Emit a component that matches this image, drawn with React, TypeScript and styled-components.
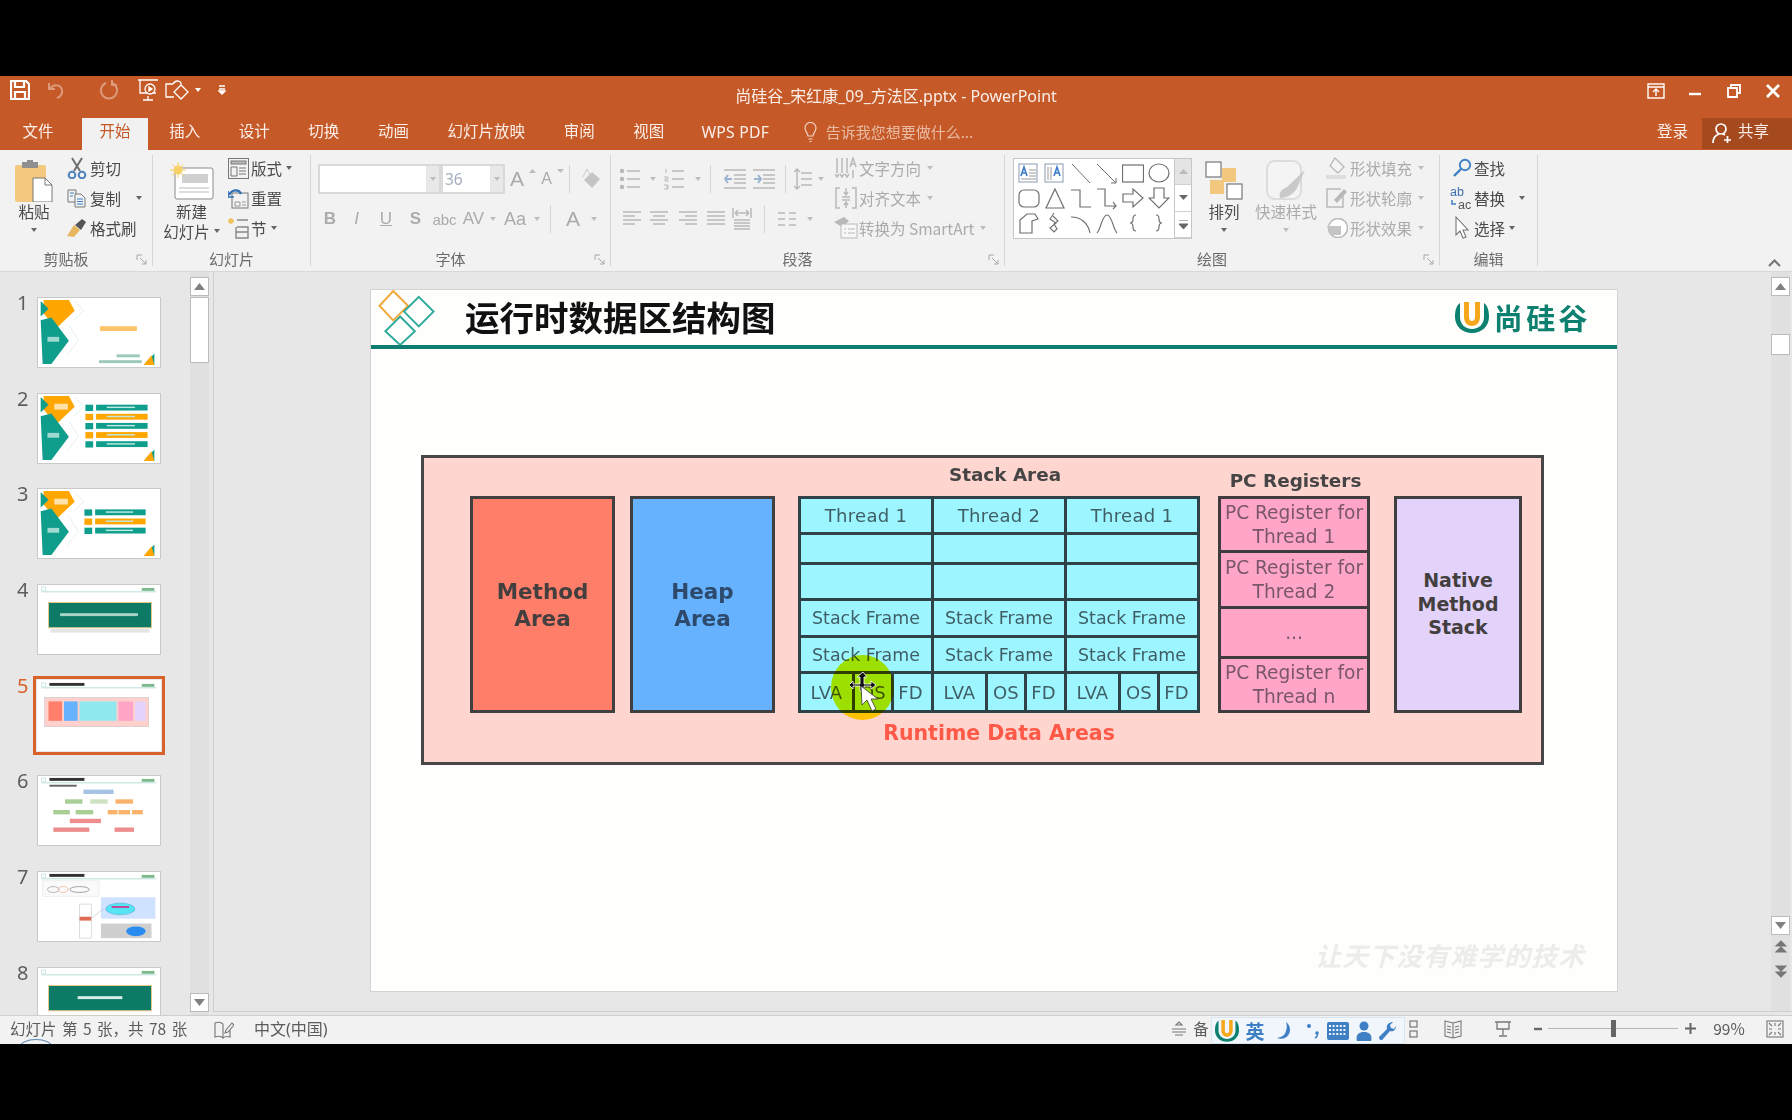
import React, { FC, ReactNode } from "react";
import styled, { createGlobalStyle } from "styled-components";

const CN = `"Noto Sans CJK SC", "Noto Sans", sans-serif`;
const DIAGRAM = `"DejaVu Sans", sans-serif`;
const ORANGE = "#c55a28";
const MUTED = "#ababab";
const INK = "#4a4a4a";
const BLUE = "#3f7fc4";

const GlobalStyle = createGlobalStyle`
  html, body { margin: 0; padding: 0; background: #000; }
  * { box-sizing: border-box; }
`;

const AppRoot = styled.div`
  width: 1792px;
  height: 1120px;
  background: #000;
  display: flex;
  flex-direction: column;
  overflow: hidden;
  font-family: ${CN};
  filter: blur(0.45px);
`;

const Letterbox = styled.div<{ $height?: number }>`
  flex: ${(p) => (p.$height ? `0 0 ${p.$height}px` : "1")};
  background: #000;
`;

const Svg = styled.svg`
  display: block;
  flex: none;
`;

/* title bar */
const TitleBar = styled.div`
  flex: 0 0 42px;
  background: ${ORANGE};
  display: grid;
  grid-template-columns: 1fr auto 1fr;
  color: #fff;
`;

const QuickAccess = styled.div`
  display: flex;
  align-items: center;
  height: 28px;
  padding-left: 10px;
`;

const QuickSlot = styled.div<{ $width: number }>`
  width: ${(p) => p.$width}px;
  display: flex;
  justify-content: center;
`;

const DocTitle = styled.div`
  font-size: 16px;
  line-height: 40px;
  color: #fbeee8;
  font-family: "Noto Sans", ${CN};
`;

const WindowControls = styled.div`
  display: flex;
  justify-content: flex-end;
  align-items: center;
  height: 30px;
`;

const ControlSlot = styled.div`
  width: 39px;
  display: flex;
  justify-content: center;
`;

/* tabs */
const TabBar = styled.div`
  flex: 0 0 32px;
  background: ${ORANGE};
  display: flex;
  padding-left: 5px;
  color: #fbeee8;
`;

const Tab = styled.div<{ $active?: boolean; $file?: boolean }>`
  padding: 0 17.5px;
  margin-right: ${(p) => (p.$file ? 11 : 3.6)}px;
  font-size: 15.5px;
  height: 32px;
  line-height: 25px;
  white-space: nowrap;
  background: ${(p) => (p.$active ? "#f1f1f1" : "transparent")};
  color: ${(p) => (p.$active ? ORANGE : "inherit")};
`;

const TabLatin = styled(Tab)`
  font-family: "Noto Sans", sans-serif;
  font-size: 15.8px;
  letter-spacing: 0.2px;
  padding: 0 16px;
  line-height: 28px;
`;

const TellMe = styled.div`
  display: flex;
  align-items: center;
  gap: 9px;
  margin-left: 15px;
  padding-bottom: 5px;
  font-size: 15px;
  color: #e9bba5;
`;

const TabRight = styled.div`
  margin-left: auto;
  display: flex;
  align-items: flex-start;
  font-size: 15.5px;
  line-height: 25px;
`;

const ShareButton = styled.div`
  margin-left: 14px;
  width: 90px;
  height: 31px;
  background: #a5491e;
  display: flex;
  align-items: center;
  gap: 6px;
  padding: 0 0 2px 10px;
`;

const ShareLabel = styled.span`
  margin-bottom: 4px;
`;

/* ribbon */
const Ribbon = styled.div`
  flex: 0 0 121px;
  background: #f1f2f1;
  border-bottom: 1px solid #d8d8d8;
  display: flex;
  padding: 5px 0;
  position: relative;
  color: ${INK};
`;

const Group = styled.div<{ $width: number }>`
  position: relative;
  width: ${(p) => p.$width}px;
  height: 111px;
  border-right: 1px solid #d6d6d6;
  display: flex;
  flex-direction: column;
`;

const GroupBody = styled.div<{ $pad?: number }>`
  height: 93px;
  display: flex;
  padding-left: ${(p) => p.$pad ?? 0}px;
`;

const GroupLabel = styled.div<{ $shift?: number }>`
  height: 18px;
  line-height: 22px;
  text-align: center;
  font-size: 15px;
  color: #6a6a6a;
  padding-right: ${(p) => p.$shift ?? 0}px;
`;

const Launcher = styled.div`
  position: absolute;
  right: 5px;
  bottom: 1px;
`;

const BigButton = styled.div<{ $width: number; $muted?: boolean; $gap?: number }>`
  width: ${(p) => p.$width}px;
  margin-left: ${(p) => p.$gap ?? 0}px;
  flex: none;
  display: flex;
  flex-direction: column;
  align-items: center;
  font-size: 15.5px;
  line-height: 20px;
  padding-top: 5px;
  color: ${(p) => (p.$muted ? MUTED : INK)};
`;

const BigIcon = styled.div`
  height: 41px;
  display: flex;
  align-items: center;
`;

const BigCaret = styled.div`
  height: 18px;
  display: flex;
  align-items: center;
`;

const NoWrapRow = styled.div`
  display: flex;
  align-items: center;
  gap: 4px;
  white-space: nowrap;
`;

const ToolList = styled.div<{ $gap?: number }>`
  display: flex;
  flex-direction: column;
  margin-top: -1px;
  margin-left: ${(p) => p.$gap ?? 0}px;
`;

const ToolRow = styled.div<{ $muted?: boolean }>`
  height: 30px;
  display: flex;
  align-items: center;
  padding-bottom: 2px;
  font-size: 15.5px;
  white-space: nowrap;
  color: ${(p) => (p.$muted ? MUTED : INK)};
`;

const ToolIcon = styled.div<{ $width: number }>`
  width: ${(p) => p.$width}px;
  flex: none;
  display: flex;
  justify-content: center;
`;

const ClipLabel = styled.span`
  margin-left: 2px;
`;

const Caret = styled.span<{ $light?: boolean; $gap?: number; $white?: boolean }>`
  display: inline-block;
  flex: none;
  margin-left: ${(p) => p.$gap ?? 4}px;
  width: 0;
  height: 0;
  border-left: 3.5px solid transparent;
  border-right: 3.5px solid transparent;
  border-top: 4px solid ${(p) => (p.$white ? "#fff" : p.$light ? "#bdbdbd" : "#666")};
`;

const FormatColumn = styled.div`
  display: flex;
  flex-direction: column;
  padding-top: 9px;
  gap: 10px;
`;

const FormatRow = styled.div`
  display: flex;
  align-items: center;
  height: 30px;
  color: ${MUTED};
`;

const ComboBox = styled.div<{ $width: number }>`
  width: ${(p) => p.$width}px;
  height: 30px;
  background: #fff;
  border: 2px solid #d9d9d9;
  display: flex;
  align-items: center;
  justify-content: flex-end;
  font-family: "Noto Sans", sans-serif;
  font-size: 15.5px;
  color: #a3aec0;
`;

const ComboValue = styled.span`
  flex: 1;
  padding-left: 2px;
`;

const ComboArrow = styled.span`
  width: 13px;
  height: 26px;
  background: #e8e8e8;
  display: flex;
  align-items: center;
  justify-content: center;
`;

const Glyph = styled.span<{ $size?: number; $bold?: boolean; $italic?: boolean; $under?: boolean; $width: number }>`
  width: ${(p) => p.$width}px;
  text-align: center;
  flex: none;
  font-family: "Liberation Sans", sans-serif;
  font-size: ${(p) => p.$size ?? 17}px;
  font-weight: ${(p) => (p.$bold ? 700 : 400)};
  font-style: ${(p) => (p.$italic ? "italic" : "normal")};
  text-decoration: ${(p) => (p.$under ? "underline" : "none")};
  color: ${MUTED};
`;

const GrowMark = styled.span`
  width: 7px;
  flex: none;
  align-self: flex-start;
  margin-top: 5px;
`;

const RowDivider = styled.span<{ $gap?: number }>`
  width: 1px;
  height: 28px;
  margin: 0 ${(p) => p.$gap ?? 6}px;
  background: #d6d6d6;
  flex: none;
`;

const IconSlot = styled.div<{ $width: number }>`
  width: ${(p) => p.$width}px;
  flex: none;
  display: flex;
  align-items: center;
  justify-content: center;
`;

const Gallery = styled.div`
  margin: 3px 0 0 8px;
  width: 179px;
  height: 81px;
  display: flex;
  background: #fff;
  border: 1px solid #c6c6c6;
`;

const GalleryGrid = styled.div`
  width: 160px;
  display: grid;
  grid-template-columns: repeat(6, 1fr);
  grid-template-rows: repeat(3, 1fr);
  padding: 2px 2px;
  justify-items: center;
  align-items: center;
`;

const GalleryScroll = styled.div`
  flex: 1;
  display: flex;
  flex-direction: column;
  border-left: 1px solid #c6c6c6;
`;

const GalleryStep = styled.div<{ $disabled?: boolean }>`
  flex: 1;
  display: flex;
  align-items: center;
  justify-content: center;
  background: ${(p) => (p.$disabled ? "#e4e4e4" : "#fff")};
  border-bottom: 1px solid #d0d0d0;
`;

const Collapse = styled.div`
  position: absolute;
  right: 11px;
  bottom: 4px;
`;

/* main area */
const Main = styled.div`
  flex: 0 0 743px;
  display: flex;
  background: #e6e7e6;
`;

const Sidebar = styled.div`
  width: 214px;
  flex: none;
  display: flex;
`;

const ThumbList = styled.div`
  width: 190px;
  height: 743px;
  overflow: hidden;
  padding-top: 25px;
`;

const ThumbRow = styled.div`
  height: 95.7px;
  display: flex;
  padding-left: 17px;
`;

const ThumbNum = styled.div<{ $active?: boolean }>`
  width: 20px;
  font-family: "Noto Sans", sans-serif;
  font-size: 20px;
  line-height: 12px;
  color: ${(p) => (p.$active ? "#d9622b" : "#5d5d5d")};
`;

const Thumb = styled.div<{ $active?: boolean }>`
  width: 124px;
  height: 71px;
  background: #fff;
  border: 1px solid ${(p) => (p.$active ? "#fff" : "#c9c9c9")};
  outline: ${(p) => (p.$active ? "3px solid #d9622b" : "none")};
  outline-offset: 1px;
`;

const ScrollTrack = styled.div`
  width: 19px;
  flex: none;
  background: #dfe0df;
  display: flex;
  flex-direction: column;
  padding-top: 5px;
  padding-bottom: 3px;
`;

const ScrollButton = styled.div`
  height: 19px;
  flex: none;
  background: #fff;
  border: 1px solid #bbb;
  display: flex;
  align-items: center;
  justify-content: center;
`;

const ScrollThumb = styled.div<{ $height: number; $top: number }>`
  height: ${(p) => p.$height}px;
  margin-top: ${(p) => p.$top}px;
  flex: none;
  background: #fff;
  border: 1px solid #bbb;
`;

const Spacer = styled.div`
  flex: 1;
`;

const PageStep = styled.div`
  height: 24px;
  flex: none;
  display: flex;
  align-items: center;
  justify-content: center;
`;

const Editor = styled.div`
  flex: 1;
  display: flex;
  border-left: 1px solid #cfcfcf;
  border-bottom: 1px solid #cfcfcf;
  margin-bottom: 3px;
  margin-left: -1px;
`;

const EditorCanvas = styled.div`
  flex: 1;
  padding: 18px 0 0 157px;
`;

const EditorScroll = styled(ScrollTrack)`
  margin-right: 2px;
  padding-bottom: 28px;
`;

/* the slide */
const Slide = styled.div`
  width: 1246px;
  height: 701px;
  background: #fefefd;
  box-shadow: 0 0 0 1px #d2d2d2;
  display: flex;
  flex-direction: column;
`;

const SlideHeader = styled.div`
  height: 59px;
  flex: none;
  border-bottom: 4px solid #0f7d71;
  display: flex;
  align-items: center;
  padding: 0 26px 0 7px;
`;

const SlideTitle = styled.div`
  margin-left: 29px;
  margin-bottom: 3px;
  font-size: 34.5px;
  font-weight: 700;
  color: #111;
  white-space: nowrap;
`;

const Brand = styled.div`
  margin-left: auto;
  display: flex;
  align-items: center;
  gap: 5px;
  margin-bottom: 2px;
`;

const BrandText = styled.div`
  font-size: 29px;
  font-weight: 700;
  letter-spacing: 3.4px;
  line-height: 34px;
  color: #0d8070;
`;

const Diagram = styled.div`
  margin: 106px 0 0 50px;
  width: 1123px;
  height: 310px;
  flex: none;
  background: #ffd5cf;
  border: 3px solid #474747;
  display: flex;
  padding-left: 46px;
  font-family: ${DIAGRAM};
`;

const Column = styled.div<{ $gap?: number; $width: number }>`
  position: relative;
  width: ${(p) => p.$width}px;
  margin-left: ${(p) => p.$gap ?? 0}px;
  flex: none;
`;

const Heading = styled.div<{ $offset: number; $size?: number; $nudge?: number }>`
  height: 38px;
  padding-top: ${(p) => p.$offset}px;
  padding-left: ${(p) => p.$nudge ?? 0}px;
  font-size: ${(p) => p.$size ?? 18.4}px;
  line-height: 24px;
  font-weight: 700;
  text-align: center;
  color: #454545;
  white-space: nowrap;
`;

const AreaBox = styled.div<{ $bg: string; $color?: string; $size: number; $lead: number; $shift?: number }>`
  height: 217px;
  background: ${(p) => p.$bg};
  border: 3px solid #404040;
  display: flex;
  align-items: center;
  justify-content: center;
  text-align: center;
  font-weight: 700;
  font-size: ${(p) => p.$size}px;
  line-height: ${(p) => p.$lead}px;
  color: ${(p) => p.$color ?? "#433f3f"};
  padding-bottom: ${(p) => p.$shift ?? 0}px;
`;

const StackGrid = styled.div`
  height: 217px;
  display: grid;
  grid-template-columns: repeat(3, 1fr);
  grid-template-rows: 33px 27px 33px 34px 33px 1fr;
  gap: 3px;
  padding: 3px;
  background: #2f4248;
`;

const StackCell = styled.div<{ $size?: number; $wide?: boolean }>`
  background: #9df6ff;
  display: flex;
  align-items: center;
  justify-content: center;
  font-size: ${(p) => p.$size ?? 18}px;
  letter-spacing: ${(p) => (p.$wide ? 0.3 : 0)}px;
  color: #3f5e66;
  white-space: nowrap;
`;

const FrameParts = styled.div`
  display: grid;
  grid-template-columns: 52fr 37fr 38fr;
  gap: 3px;

  & > :last-child {
    padding-right: 4px;
  }
`;

const RuntimeLabel = styled(Heading)`
  color: #ff5a48;
`;

const RegisterStack = styled.div`
  height: 217px;
  display: grid;
  grid-template-rows: 51px 53px 47px 1fr;
  gap: 3px;
  padding: 3px;
  background: #403c3e;
`;

const RegisterCell = styled.div`
  background: #ffa6c8;
  display: flex;
  align-items: center;
  justify-content: center;
  text-align: center;
  font-size: 18.6px;
  line-height: 24px;
  color: #79566b;
  white-space: nowrap;
`;

const Highlight = styled.div`
  position: absolute;
  left: 33px;
  top: 197px;
  width: 63px;
  height: 65px;
  border-radius: 50%;
  background: #ffe800;
  mix-blend-mode: multiply;
`;

const Pointer = styled.div`
  position: absolute;
  left: 52px;
  top: 213px;
`;

const Watermark = styled.div`
  margin: auto 32px 18px auto;
  font-size: 26px;
  font-style: italic;
  letter-spacing: 1px;
  color: #ececeb;
  white-space: nowrap;
  font-weight: 700;
`;

/* status bar */
const StatusBar = styled.div`
  flex: 0 0 29px;
  min-height: 0;
  position: relative;
  overflow: hidden;
  background: #f1f2f1;
  border-top: 1px solid #cfcfcf;
  display: flex;
  align-items: center;
  padding-left: 10px;
  font-size: 15.5px;
  color: #5c5c5c;
`;

const StatusText = styled.div<{ $lift?: number }>`
  padding-bottom: ${(p) => p.$lift ?? 5}px;
`;

const SlideCount = styled(StatusText)`
  width: 204px;
  word-spacing: 2px;
`;

const Lang = styled(StatusText)`
  margin-left: 20px;
  font-size: 16px;
  font-family: "Noto Sans", ${CN};
`;

const NoteArc = styled.div`
  position: absolute;
  left: 20px;
  bottom: -10px;
  width: 32px;
  height: 15px;
  border: 1px solid #5b87b5;
  border-radius: 50%;
`;

const StatusRight = styled.div`
  margin-left: auto;
  display: flex;
  align-items: center;
  height: 100%;
  padding-bottom: 3px;
`;

const StatusSlot = styled.div<{ $width: number }>`
  width: ${(p) => p.$width}px;
  display: flex;
  justify-content: center;
  align-items: center;
  flex: none;
`;

const NotesCut = styled.span`
  margin-right: 186px;
  padding-bottom: 2px;
`;

const ZoomTrack = styled.div`
  width: 130px;
  height: 1px;
  background: #b5b5b5;
  position: relative;
  margin: 0 2px;
`;

const ZoomKnob = styled.div`
  position: absolute;
  left: 63px;
  top: -8px;
  width: 5px;
  height: 17px;
  background: #666;
`;

const ImeBar = styled.div`
  position: absolute;
  left: 1211px;
  top: 1px;
  width: 194px;
  height: 27px;
  background: #f0f6fb;
  border: 1px solid #d9e6f1;
  display: flex;
  align-items: center;
  padding-left: 3px;
  color: ${BLUE};
`;

const ImeText = styled.div`
  width: 28px;
  margin-left: 2px;
  font-size: 19px;
  line-height: 24px;
  font-weight: 700;
  text-align: center;
`;

/* icons */
const WinIcon: FC<{ w: number; h: number; children: ReactNode; stroke?: string; sw?: number }> = ({
  w,
  h,
  children,
  stroke = "#fff",
  sw = 1.5,
}) => (
  <Svg width={w} height={h} viewBox={`0 0 ${w} ${h}`} fill="none" stroke={stroke} strokeWidth={sw}>
    {children}
  </Svg>
);

type Seg = [number, number, number];
const Lines: FC<{ w: number; h: number; segs: Seg[]; color?: string; children?: ReactNode }> = ({
  w,
  h,
  segs,
  color = "#b9b9b9",
  children,
}) => (
  <WinIcon w={w} h={h} stroke={color}>
    {segs.map(([a, b, y], i) => (
      <line key={i} x1={a} x2={b} y1={y} y2={y} />
    ))}
    {children}
  </WinIcon>
);

const PasteIcon = () => (
  <Svg width={38} height={42} viewBox="0 0 38 42">
    <rect x="0" y="5" width="31" height="37" rx="2" fill="#f3c97f" />
    <rect x="7" y="2" width="16" height="6" fill="#8f8f8f" />
    <rect x="12" y="0" width="6" height="4" fill="#8f8f8f" />
    <path d="M18 18h12l7 7v17H18z" fill="#fff" stroke="#777" />
    <path d="M30 18v7h7" fill="none" stroke="#777" />
  </Svg>
);

const ScissorsIcon = () => (
  <WinIcon w={20} h={22} stroke="#6d6d6d" sw={2}>
    <path d="M5 1l8 13M15 1L7 14" />
    <circle cx="5" cy="18" r="3.3" stroke="#4f82bd" />
    <circle cx="15" cy="18" r="3.3" stroke="#4f82bd" />
  </WinIcon>
);

const CopyIcon = () => (
  <WinIcon w={20} h={20} stroke="#777" sw={1}>
    <path d="M1 2h8v12H1z" />
    <path d="M8 6h6l4 4v9H8z" fill="#f1f2f1" />
    <path d="M10 11h6M10 13.5h6M10 16h6M3 5h4M3 8h3" stroke={BLUE} />
  </WinIcon>
);

const PainterIcon = () => (
  <Svg width={22} height={20} viewBox="0 0 22 20">
    <path d="M1 18l7-11 6 5-6 7z" fill="#e6b75f" />
    <path d="M9 7l7-6 4 3-5 8z" fill="#555" />
  </Svg>
);

const NewSlideIcon = () => (
  <Svg width={44} height={38} viewBox="0 0 44 38">
    <rect x="5" y="6" width="38" height="31" rx="2" fill="#fff" stroke="#8a8a8a" />
    <rect x="12" y="12" width="26" height="9" fill="#d0d0d0" />
    <path d="M9 26h30M9 30h30" stroke="#bbb" />
    <circle cx="8" cy="8" r="4.5" fill="#f8d46c" />
    <path d="M8 0v16M0 8h16M2.500 2.500l11 11M13.500 2.500l-11 11" stroke="#f6cf60" />
  </Svg>
);

const LayoutIcon = () => (
  <WinIcon w={21} h={21} stroke="#777" sw={1}>
    <rect x="0.5" y="0.5" width="20" height="20" />
    <rect x="3" y="3" width="15" height="3" fill="#bbb" />
    <path d="M3 9h6v9H3zM11 10h7M11 13h7M11 16h7" />
  </WinIcon>
);

const ResetIcon = () => (
  <WinIcon w={21} h={21} stroke="#777" sw={1}>
    <rect x="4" y="5" width="16" height="15" />
    <path d="M7 14h5v4H7zM14 14h4M14 17h4" stroke="#999" />
    <path d="M1 7c3-6 10-6 12-1" stroke="#2f6fb5" strokeWidth="2.4" />
    <path d="M0 3v6h6" stroke="#2f6fb5" strokeWidth="1.6" />
  </WinIcon>
);

const SectionIcon = () => (
  <WinIcon w={21} h={22} stroke="#888" sw={1.4}>
    <path d="M9 3h11M9 10h11v11H8V10M8 15h12" />
    <path d="M3 1v6M0 4h6M1 2l4 4M5 2L1 6" stroke="#f2c05b" />
  </WinIcon>
);

const Eraser = () => (
  <Svg width={20} height={22} viewBox="0 0 20 22">
    <path d="M3 12l8-8 8 7-8 9z" fill="#c5c5c5" />
    <path d="M2 9L6 1M6 1l4 8" stroke="#ccc" fill="none" />
  </Svg>
);

const GrowTri: FC<{ down?: boolean }> = ({ down }) => (
  <GrowMark>
    <Svg width={7} height={4} viewBox="0 0 7 4">
      <path d={down ? "M0 0h7L3.500 4z" : "M0 4h7L3.500 0z"} fill="#bdbdbd" />
    </Svg>
  </GrowMark>
);

const BulletIcon = () => (
  <Lines w={20} h={22} segs={[[7, 20, 3], [7, 20, 11], [7, 20, 19]]}>
    <circle cx="2" cy="3" r="1.5" fill="#bbb" />
    <circle cx="2" cy="11" r="1.5" fill="#bbb" />
    <circle cx="2" cy="19" r="1.5" fill="#bbb" />
  </Lines>
);

const NumberedIcon = () => (
  <Lines w={20} h={22} segs={[[8, 20, 3], [8, 20, 11], [8, 20, 19]]}>
    <path d="M2 1v4M0 9h4v2H1v2h4M0 17h4v4H0M2 19h2" strokeWidth="1" />
  </Lines>
);

const IndentIcon: FC<{ flip?: boolean }> = ({ flip }) => (
  <Lines w={22} h={20} segs={[[0, 22, 1], [10, 22, 6], [10, 22, 10], [10, 22, 14], [0, 22, 19]]}>
    <path d={flip ? "M1 10h7M5 6l3 4-3 4" : "M8 10H1M4 6l-3 4 3 4"} stroke="#9ab3cf" strokeWidth="2" />
  </Lines>
);

const LineSpacingIcon = () => (
  <Lines w={18} h={24} segs={[[7, 18, 6], [7, 18, 12], [7, 18, 18]]}>
    <path d="M3 2v20M0 5l3-3 3 3M0 19l3 3 3-3" />
  </Lines>
);

const alignIcon = (a: number[], b: number[]) => (
  <Lines w={18} h={18} segs={[[a[0], a[1], 2], [b[0], b[1], 6], [a[0], a[1], 10], [b[0], b[1], 14]]} />
);

const DistributeIcon = () => (
  <Lines w={20} h={24} segs={[[2, 18, 13], [2, 18, 16], [2, 18, 19], [2, 18, 22]]}>
    <path d="M1 1v10M19 1v10M3 6h14M3 6l3-3M3 6l3 3M17 6l-3-3M17 6l-3 3" />
  </Lines>
);

const ColumnsIcon = () => (
  <Lines w={18} h={16} segs={[[0, 7, 2], [11, 18, 2], [0, 7, 8], [11, 18, 8], [0, 7, 14], [11, 18, 14]]} />
);

const TextDirIcon = () => (
  <WinIcon w={22} h={22} stroke="#b9b9b9">
    <path d="M2 1v15M7 1v15M12 1v15" />
    <path d="M0 17l2 3 2-3M5 17l2 3 2-3M10 17l2 3 2-3" />
    <path d="M15 10l3-9 3 9M16 7h4M18 13v8" />
  </WinIcon>
);

const AlignTextIcon = () => (
  <WinIcon w={22} h={22} stroke="#b9b9b9">
    <path d="M5 1H1v20h4M17 1h4v20h-4M7 10h8M7 13h8M11 1v7M9 5l2 3 2-3M11 21v-6M9 18l2-3 2 3" />
  </WinIcon>
);

const SmartArtIcon = () => (
  <Svg width={24} height={22} viewBox="0 0 24 22">
    <path d="M0 5l10-5 5 4-7 6z" fill="#b9b9b9" />
    <rect x="7" y="7" width="16" height="14" fill="#f7f7f7" stroke="#b9b9b9" />
    <path d="M10 12h2M14 12h7M10 16h2M14 16h7" stroke="#b9b9b9" />
  </Svg>
);

const ArrangeIcon = () => (
  <Svg width={38} height={40} viewBox="0 0 38 40">
    <rect x="17" y="7" width="14" height="14" fill="#f2c87e" />
    <rect x="5" y="19" width="14" height="14" fill="#f2c87e" />
    <rect x="1" y="1" width="15" height="15" fill="#fff" stroke="#777" strokeWidth="1.2" />
    <rect x="22" y="23" width="15" height="15" fill="#fff" stroke="#777" strokeWidth="1.2" />
  </Svg>
);

const QuickStyleIcon = () => (
  <Svg width={40} height={42} viewBox="0 0 40 42">
    <rect x="1" y="1" width="34" height="38" rx="8" fill="#f4f4f4" stroke="#dcdcdc" strokeWidth="2" />
    <path d="M14 38c-2-7 3-9 7-11L39 10l-8 18c-3 6-10 10-17 10z" fill="#c9c9c9" />
  </Svg>
);

const FillIcon = () => (
  <Svg width={22} height={22} viewBox="0 0 22 22">
    <path d="M9 1l9 9-6 6-8-7z" fill="#f4f4f4" stroke="#b5b5b5" strokeWidth="1.2" />
    <rect x="0" y="18" width="20" height="4" fill="#dedede" />
  </Svg>
);

const OutlineIcon = () => (
  <WinIcon w={22} h={20} stroke="#b9b9b9">
    <path d="M15 1H1v18h16V8" />
    <path d="M9 12l9-10 2 2-9 10z" fill="#b9b9b9" />
  </WinIcon>
);

const EffectIcon = () => (
  <Svg width={22} height={20} viewBox="0 0 22 20">
    <circle cx="12" cy="10" r="9.500" fill="#fff" stroke="#bbb" strokeWidth="1.6" />
    <path d="M1 8h14v9H5z" fill="#c5c5c5" />
  </Svg>
);

const FindIcon = () => (
  <WinIcon w={20} h={20} stroke="#3f7fc4" sw={2.4}>
    <circle cx="13" cy="7" r="5.2" strokeWidth="1.9" />
    <path d="M9 11l-7 7" />
  </WinIcon>
);

const ReplaceIcon = () => (
  <Svg width={23} height={26} viewBox="0 0 23 26">
    <text x="0" y="11" fontFamily="Liberation Sans" fontSize="12.500" fill="#3f6fb0">ab</text>
    <text x="8" y="24" fontFamily="Liberation Sans" fontSize="12.500" fill="#555">ac</text>
    <path d="M2 15v4h4" stroke="#3f7fc4" strokeWidth="1.5" fill="none" />
  </Svg>
);

const SelectIcon = () => (
  <WinIcon w={16} h={24} stroke="#777" sw={1.1}>
    <path d="M2 1v18l4-4 3 7 3-1-3-7h5z" fill="#fff" />
  </WinIcon>
);

const s = "#6f6f6f";
const SHAPES: ReactNode[] = [
  <>
    <rect x="1" y="3" width="18" height="18" stroke="#8a9bb0" />
    <path d="M11 9h7M11 12h7M11 15h7M3 18h15" stroke="#999" />
    <path d="M3 15l3-9 3 9M4 12h4" stroke="#3d7cc9" strokeWidth="1.6" />
  </>,
  <>
    <rect x="1" y="3" width="18" height="18" stroke="#8a9bb0" />
    <path d="M4 6v13M7 6v13" stroke="#999" />
    <path d="M10 15l3-9 3 9M11 12h4" stroke="#3d7cc9" strokeWidth="1.6" />
  </>,
  <path d="M2 3l18 19" stroke={s} />,
  <path d="M1 3l19 19M20 17v5h-5" stroke={s} />,
  <rect x="0.5" y="4" width="21" height="17" stroke={s} strokeWidth="1.2" />,
  <ellipse cx="11" cy="12" rx="10" ry="9" stroke={s} strokeWidth="1.2" />,
  <rect x="1" y="4" width="20" height="17" rx="5" stroke={s} strokeWidth="1.2" />,
  <path d="M11 3l9 19H2z" stroke={s} strokeWidth="1.2" />,
  <path d="M1 4h9v17h11" stroke={s} strokeWidth="1.2" />,
  <path d="M1 3h8v17h11M17 16l3 4-3 3" stroke={s} strokeWidth="1.2" />,
  <path d="M1 8h10V3l10 9-10 9v-5H1z" stroke={s} strokeWidth="1.2" />,
  <path d="M6 2h10v10h5L11 22 1 12h5z" stroke={s} strokeWidth="1.2" />,
  <path d="M2 22V9l7-6h8l3 5-6 2v12z" stroke={s} strokeWidth="1.2" />,
  <path d="M10 2L6 8l6 4-6 5 4 4 3-3-3-5 4-3-5-5" stroke={s} strokeWidth="1.1" />,
  <path d="M1 6c10 0 17 6 19 16" stroke={s} strokeWidth="1.2" />,
  <path d="M1 22C5 18 6 4 11 4s6 14 10 18" stroke={s} strokeWidth="1.2" />,
  <path d="M14 4c-3 0-3 2-3 4s0 4-3 4c3 0 3 2 3 4s0 4 3 4" stroke={s} strokeWidth="1.2" />,
  <path d="M8 4c3 0 3 2 3 4s0 4 3 4c-3 0-3 2-3 4s0 4-3 4" stroke={s} strokeWidth="1.2" />,
];

const Launch = () => (
  <WinIcon w={11} h={11} stroke="#a8a8a8" sw={1}>
    <path d="M1 6V1h5M4 4l6 6M10 6v4H6" />
  </WinIcon>
);

const Tri: FC<{ down?: boolean; color?: string }> = ({ down, color = "#666" }) => (
  <Svg width={11} height={7} viewBox="0 0 11 7">
    <path d={down ? "M0 0h11L5.500 7z" : "M0 7h11L5.500 0z"} fill={color} />
  </Svg>
);

/* thumbnails, drawn small */
const TEAL = "#0f9d8c";
const AMB = "#ffa600";

const Cover: FC<{ children?: ReactNode }> = ({ children }) => (
  <>
    <path d="M37 3l9 10-10 10M31 28l10 16-12 14" stroke="#e3f0ee" fill="none" />
    <path d="M5 2h26l6 11-19 18L5 16z" fill={AMB} />
    <path d="M2 3l8 8-8 8zM2 23l11-3 18 24-18 24H4z" fill={TEAL} />
    <rect x="9" y="40" width="12" height="5" fill="#9fd9d0" />
    <path d="M108 69l11-12v12z" fill={TEAL} />
    <path d="M108 69l8-10 3 10z" fill={AMB} />
    {children}
  </>
);

const ListBars: FC<{ y: number; n: number; x: number; step: number; w: number }> = ({ y, n, x, step, w }) => (
  <>
    {Array.from({ length: n }).map((_, i) => (
      <g key={i} fill={i % 2 ? AMB : TEAL}>
        <rect x={x} y={y + i * step} width="8" height="6.500" />
        <rect x={x + 11} y={y + i * step} width={w} height="6" />
        <rect x={x + 22} y={y + i * step + 2} width={w - 24} height="1.500" fill="#bfe8e0" />
      </g>
    ))}
  </>
);

const Head: FC<{ title?: boolean }> = ({ title }) => (
  <>
    <path d="M3 7h118" stroke="#b9dfda" />
    <rect x="3" y="2" width="4" height="4" fill="none" stroke="#cde8e4" />
    <rect x="106" y="3" width="13" height="3" fill="#7cb98c" />
    {title && <rect x="11" y="2" width="36" height="3" fill="#333" />}
  </>
);

const GreenBox = () => <rect x="10" y="18" width="106" height="26" fill="#0d7a66" stroke="#e8c98a" />;

const R: FC<{ x: number; y: number; w: number; c: string; h?: number }> = ({ x, y, w, c, h = 4.5 }) => (
  <rect x={x} y={y} width={w} height={h} fill={c} />
);

const THUMBS: ReactNode[] = [
  <Cover>
    <rect x="63" y="29" width="38" height="5" fill="#ffc46b" />
    <rect x="80" y="58" width="24" height="3" fill="#9dc9bb" />
    <rect x="62" y="64" width="44" height="3" fill="#9dc9bb" />
  </Cover>,
  <Cover>
    <rect x="16" y="10" width="14" height="6" fill="#ffe2a9" />
    <ListBars y={11} n={5} x={48} step={9.4} w={53} />
  </Cover>,
  <Cover>
    <rect x="16" y="10" width="14" height="6" fill="#ffe2a9" />
    <ListBars y={21} n={3} x={47} step={9.4} w={52} />
  </Cover>,
  <>
    <Head />
    <GreenBox />
    <rect x="22" y="29" width="80" height="3" fill="#a8d5c8" />
    <rect x="12" y="45" width="102" height="4" fill="#e5e5e5" />
  </>,
  <>
    <Head title />
    <rect x="6" y="17" width="107" height="30" fill="#ffd0cc" stroke="#bbb" strokeWidth=".5" />
    <rect x="10" y="21" width="14" height="20" fill="#ff7f6b" />
    <rect x="26" y="21" width="14" height="20" fill="#66b2ff" />
    <rect x="42" y="21" width="38" height="20" fill="#8fe9ef" />
    <rect x="82" y="21" width="15" height="20" fill="#ffa6c8" />
    <rect x="99" y="21" width="11" height="20" fill="#e3d2fb" />
  </>,
  <>
    <Head title />
    <rect x="11" y="9" width="28" height="2" fill="#666" />
    <R x={46} y={14} w={31} c="#a6c3e6" />
    <R x={27} y={24} w={18} c="#a8cf95" />
    <R x={53} y={24} w={18} c="#cfe3c4" />
    <R x={79} y={24} w={18} c="#f9b36b" />
    <R x={15} y={35} w={17} c="#a8cf95" />
    <R x={38} y={35} w={18} c="#a8cf95" />
    <R x={71} y={35} w={10} c="#f9b36b" />
    <R x={82} y={35} w={12} c="#f9b36b" />
    <R x={96} y={35} w={11} c="#f9b36b" />
    <R x={32} y={44} w={32} c="#ee8d8d" />
    <R x={15} y={53} w={37} c="#ee8d8d" />
    <R x={78} y={53} w={20} c="#ee8d8d" />
  </>,
  <>
    <Head title />
    <rect x="4" y="9" width="58" height="16" fill="#fafafa" stroke="#eee" />
    <ellipse cx="15" cy="18" rx="6" ry="3" fill="none" stroke="#888" strokeWidth=".6" />
    <ellipse cx="25" cy="18" rx="5" ry="3" fill="none" stroke="#e8a080" strokeWidth=".6" />
    <ellipse cx="42" cy="18" rx="10" ry="3" fill="none" stroke="#666" strokeWidth=".6" />
    <rect x="64" y="26" width="56" height="22" fill="#cfe2ff" />
    <ellipse cx="84" cy="38" rx="15" ry="6" fill="#55e6f5" stroke="#5b9ad0" strokeWidth=".5" />
    <rect x="75" y="35" width="18" height="2" fill="#c04a9a" />
    <rect x="64" y="53" width="52" height="15" fill="#cfcfcf" />
    <ellipse cx="100" cy="61" rx="10" ry="5" fill="#2a8cf0" />
    <rect x="42" y="33" width="12" height="35" fill="#fff" stroke="#bbb" strokeWidth=".5" />
    <rect x="42" y="46" width="12" height="4" fill="#e06a55" />
    <path d="M54 48l12-10" stroke="#aaa" strokeWidth=".5" />
  </>,
  <>
    <Head />
    <GreenBox />
    <rect x="40" y="29" width="46" height="3" fill="#d8efe8" />
  </>,
];

const UBadge: FC<{ w: number; h: number }> = ({ w, h }) => (
  <Svg width={w} height={h} viewBox="0 0 34 34">
    <path
      d="M5 3C1 6 0 11 0 17c0 9 7 16 17 16s17-7 17-16c0-6-1-11-5-14v14c0 7-5 12-12 12S5 24 5 17z"
      fill="#0d8070"
    />
    <path d="M9 2h5v15c0 2 1 4 3 4s3-2 3-4V2h5v15c0 5-3 9-8 9s-8-4-8-9z" fill="#f5a81c" />
  </Svg>
);

const App: FC = () => (
  <AppRoot>
    <GlobalStyle />
    <Letterbox $height={76} />

    <TitleBar>
      <QuickAccess>
        <QuickSlot $width={20}>
          <WinIcon w={20} h={20} sw={2.2}>
            <path d="M1 1h15l3 3v15H1zM5 1v6h9V1M5 19v-7h10v7" />
          </WinIcon>
        </QuickSlot>
        <QuickSlot $width={58}>
          <WinIcon w={24} h={18} stroke="#dc9a7a" sw={2}>
            <path d="M2 2v6h6M3 8c4-6 11-4 12 1 1 4-2 7-5 8" />
          </WinIcon>
        </QuickSlot>
        <QuickSlot $width={44}>
          <WinIcon w={20} h={20} stroke="#dc9a7a" sw={2}>
            <path d="M12 3A8 8 0 1 1 6 3M12 0v5h5" />
          </WinIcon>
        </QuickSlot>
        <QuickSlot $width={32}>
          <WinIcon w={22} h={22} sw={1.3}>
            <path d="M1 1h20M3 1v13h16M11 17v4M6 21h10" />
            <circle cx="13" cy="10" r="5" fill={ORANGE} />
            <path d="M12 8l3 2-3 2z" fill="#fff" />
          </WinIcon>
        </QuickSlot>
        <QuickSlot $width={26}>
          <WinIcon w={24} h={22} sw={1.3}>
            <path d="M8 5H1v13h8M9 13l7-7 7 7-7 7zM8 5c3-5 9-3 8 1" />
          </WinIcon>
        </QuickSlot>
        <Caret $gap={5} $white />
        <QuickSlot $width={42}>
          <WinIcon w={8} h={10} sw={1.3}>
            <path d="M1 1h6M1 4h6" />
            <path d="M1 6h6L4 9z" fill="#fff" />
          </WinIcon>
        </QuickSlot>
      </QuickAccess>
      <DocTitle>尚硅谷_宋红康_09_方法区.pptx - PowerPoint</DocTitle>
      <WindowControls>
        <ControlSlot>
          <WinIcon w={18} h={16} sw={1.4}>
            <rect x="1" y="1" width="16" height="14" />
            <path d="M1 4h16M9 13V6M6 9l3-3 3 3" />
          </WinIcon>
        </ControlSlot>
        <ControlSlot>
          <WinIcon w={14} h={14} sw={2.4}>
            <path d="M1 10h12" />
          </WinIcon>
        </ControlSlot>
        <ControlSlot>
          <WinIcon w={14} h={14} sw={1.8}>
            <path d="M4 4V1h9v8h-3M1 4h9v9H1z" />
          </WinIcon>
        </ControlSlot>
        <ControlSlot>
          <WinIcon w={14} h={14} sw={2.8}>
            <path d="M1 1l12 12M13 1L1 13" />
          </WinIcon>
        </ControlSlot>
      </WindowControls>
    </TitleBar>

    <TabBar>
      <Tab $file>文件</Tab>
      <Tab $active>开始</Tab>
      <Tab>插入</Tab>
      <Tab>设计</Tab>
      <Tab>切换</Tab>
      <Tab>动画</Tab>
      <Tab>幻灯片放映</Tab>
      <Tab>审阅</Tab>
      <Tab>视图</Tab>
      <TabLatin>WPS PDF</TabLatin>
      <TellMe>
        <WinIcon w={13} h={20} stroke="#f2d5c6" sw={1.2}>
          <path d="M4 14c0-3-3-4-3-8a5.500 5.500 0 0 1 11 0c0 4-3 5-3 8zM4.500 17h4M5.500 19.500h2" />
        </WinIcon>
        告诉我您想要做什么...
      </TellMe>
      <TabRight>
        登录
        <ShareButton>
          <WinIcon w={20} h={22} sw={1.7}>
            <circle cx="9" cy="7" r="5" />
            <path d="M1 21c0-5 3-8 6-9M11 12l2 1M12 18h7M15.500 14v7" />
          </WinIcon>
          <ShareLabel>共享</ShareLabel>
        </ShareButton>
      </TabRight>
    </TabBar>

    <Ribbon>
      <Group $width={153}>
        <GroupBody $pad={3}>
          <BigButton $width={62}>
            <BigIcon>
              <PasteIcon />
            </BigIcon>
            粘贴
            <BigCaret>
              <Caret $gap={0} />
            </BigCaret>
          </BigButton>
          <ToolList>
            <ToolRow>
              <ToolIcon $width={23}>
                <ScissorsIcon />
              </ToolIcon>
              <ClipLabel>剪切</ClipLabel>
            </ToolRow>
            <ToolRow>
              <ToolIcon $width={23}>
                <CopyIcon />
              </ToolIcon>
              <ClipLabel>复制</ClipLabel>
              <Caret $gap={15} />
            </ToolRow>
            <ToolRow>
              <ToolIcon $width={23}>
                <PainterIcon />
              </ToolIcon>
              <ClipLabel>格式刷</ClipLabel>
            </ToolRow>
          </ToolList>
        </GroupBody>
        <GroupLabel $shift={20}>剪贴板</GroupLabel>
        <Launcher>
          <Launch />
        </Launcher>
      </Group>

      <Group $width={158}>
        <GroupBody $pad={4}>
          <BigButton $width={69}>
            <BigIcon>
              <NewSlideIcon />
            </BigIcon>
            新建
            <NoWrapRow>
              幻灯片
              <Caret $gap={0} />
            </NoWrapRow>
          </BigButton>
          <ToolList>
            <ToolRow>
              <ToolIcon $width={25}>
                <LayoutIcon />
              </ToolIcon>
              版式
              <Caret />
            </ToolRow>
            <ToolRow>
              <ToolIcon $width={25}>
                <ResetIcon />
              </ToolIcon>
              重置
            </ToolRow>
            <ToolRow>
              <ToolIcon $width={25}>
                <SectionIcon />
              </ToolIcon>
              节
              <Caret />
            </ToolRow>
          </ToolList>
        </GroupBody>
        <GroupLabel>幻灯片</GroupLabel>
      </Group>

      <Group $width={300}>
        <GroupBody $pad={7}>
          <FormatColumn>
            <FormatRow>
              <ComboBox $width={123}>
                <ComboArrow>
                  <Caret $light $gap={0} />
                </ComboArrow>
              </ComboBox>
              <ComboBox $width={64}>
                <ComboValue>36</ComboValue>
                <ComboArrow>
                  <Caret $light $gap={0} />
                </ComboArrow>
              </ComboBox>
              <Glyph $width={24} $size={21}>A</Glyph>
              <GrowTri />
              <Glyph $width={21} $size={16}>A</Glyph>
              <GrowTri down />
              <RowDivider $gap={5} />
              <IconSlot $width={32}>
                <Eraser />
              </IconSlot>
            </FormatRow>
            <FormatRow>
              <Glyph $width={24} $bold>B</Glyph>
              <Glyph $width={29} $italic>I</Glyph>
              <Glyph $width={30} $under>U</Glyph>
              <Glyph $width={29} $bold>S</Glyph>
              <Glyph $width={29} $size={15}>abc</Glyph>
              <Glyph $width={29}>AV</Glyph>
              <Caret $light $gap={2} />
              <Glyph $width={38} $size={18}>Aa</Glyph>
              <Caret $light $gap={0} />
              <RowDivider $gap={10} />
              <Glyph $width={24} $size={21}>A</Glyph>
              <Caret $light $gap={6} />
            </FormatRow>
          </FormatColumn>
        </GroupBody>
        <GroupLabel $shift={20}>字体</GroupLabel>
        <Launcher>
          <Launch />
        </Launcher>
      </Group>

      <Group $width={394}>
        <GroupBody $pad={9}>
          <FormatColumn>
            <FormatRow>
              <IconSlot $width={20}>
                <BulletIcon />
              </IconSlot>
              <Caret $light $gap={10} />
              <IconSlot $width={36}>
                <NumberedIcon />
              </IconSlot>
              <Caret $light $gap={3} />
              <RowDivider $gap={9} />
              <IconSlot $width={30}>
                <IndentIcon />
              </IconSlot>
              <IconSlot $width={28}>
                <IndentIcon flip />
              </IconSlot>
              <RowDivider $gap={7} />
              <IconSlot $width={20}>
                <LineSpacingIcon />
              </IconSlot>
              <Caret $light $gap={5} />
            </FormatRow>
            <FormatRow>
              <IconSlot $width={24}>{alignIcon([0, 18], [0, 12])}</IconSlot>
              <IconSlot $width={29}>{alignIcon([0, 18], [3, 15])}</IconSlot>
              <IconSlot $width={29}>{alignIcon([0, 18], [6, 18])}</IconSlot>
              <IconSlot $width={28}>{alignIcon([0, 18], [0, 18])}</IconSlot>
              <IconSlot $width={24}>
                <DistributeIcon />
              </IconSlot>
              <RowDivider $gap={10} />
              <IconSlot $width={24}>
                <ColumnsIcon />
              </IconSlot>
              <Caret $light $gap={8} />
            </FormatRow>
          </FormatColumn>
          <ToolList $gap={9}>
            <ToolRow $muted>
              <ToolIcon $width={26}>
                <TextDirIcon />
              </ToolIcon>
              文字方向
              <Caret $light $gap={6} />
            </ToolRow>
            <ToolRow $muted>
              <ToolIcon $width={26}>
                <AlignTextIcon />
              </ToolIcon>
              对齐文本
              <Caret $light $gap={6} />
            </ToolRow>
            <ToolRow $muted>
              <ToolIcon $width={26}>
                <SmartArtIcon />
              </ToolIcon>
              转换为 SmartArt
              <Caret $light $gap={6} />
            </ToolRow>
          </ToolList>
        </GroupBody>
        <GroupLabel $shift={20}>段落</GroupLabel>
        <Launcher>
          <Launch />
        </Launcher>
      </Group>

      <Group $width={435}>
        <GroupBody>
          <Gallery>
            <GalleryGrid>
              {SHAPES.map((shape, i) => (
                <Svg key={i} width={22} height={25} viewBox="0 0 22 25" fill="none">
                  {shape}
                </Svg>
              ))}
            </GalleryGrid>
            <GalleryScroll>
              <GalleryStep $disabled>
                <Svg width={9} height={5} viewBox="0 0 9 5">
                  <path d="M0 5h9L4.500 0z" fill="#bbb" />
                </Svg>
              </GalleryStep>
              <GalleryStep>
                <Svg width={9} height={5} viewBox="0 0 9 5">
                  <path d="M0 0h9L4.500 5z" fill="#666" />
                </Svg>
              </GalleryStep>
              <GalleryStep>
                <Svg width={9} height={9} viewBox="0 0 9 9">
                  <path d="M0 0h9M0 4h9L4.500 9z" stroke="#666" fill="#666" />
                </Svg>
              </GalleryStep>
            </GalleryScroll>
          </Gallery>
          <BigButton $width={50} $gap={7}>
            <BigIcon>
              <ArrangeIcon />
            </BigIcon>
            排列
            <BigCaret>
              <Caret $gap={0} />
            </BigCaret>
          </BigButton>
          <BigButton $width={68} $muted $gap={3}>
            <BigIcon>
              <QuickStyleIcon />
            </BigIcon>
            快速样式
            <BigCaret>
              <Caret $light $gap={0} />
            </BigCaret>
          </BigButton>
          <ToolList $gap={4}>
            <ToolRow $muted>
              <ToolIcon $width={26}>
                <FillIcon />
              </ToolIcon>
              形状填充
              <Caret $light $gap={6} />
            </ToolRow>
            <ToolRow $muted>
              <ToolIcon $width={26}>
                <OutlineIcon />
              </ToolIcon>
              形状轮廓
              <Caret $light $gap={6} />
            </ToolRow>
            <ToolRow $muted>
              <ToolIcon $width={26}>
                <EffectIcon />
              </ToolIcon>
              形状效果
              <Caret $light $gap={6} />
            </ToolRow>
          </ToolList>
        </GroupBody>
        <GroupLabel $shift={20}>绘图</GroupLabel>
        <Launcher>
          <Launch />
        </Launcher>
      </Group>

      <Group $width={98}>
        <GroupBody $pad={9}>
          <ToolList>
            <ToolRow>
              <ToolIcon $width={25}>
                <FindIcon />
              </ToolIcon>
              查找
            </ToolRow>
            <ToolRow>
              <ToolIcon $width={25}>
                <ReplaceIcon />
              </ToolIcon>
              替换
              <Caret $gap={14} />
            </ToolRow>
            <ToolRow>
              <ToolIcon $width={25}>
                <SelectIcon />
              </ToolIcon>
              选择
              <Caret />
            </ToolRow>
          </ToolList>
        </GroupBody>
        <GroupLabel>编辑</GroupLabel>
      </Group>

      <Collapse>
        <WinIcon w={13} h={8} stroke="#777" sw={2.2}>
          <path d="M1 7l5.500-5.500L12 7" />
        </WinIcon>
      </Collapse>
    </Ribbon>

    <Main>
      <Sidebar>
        <ThumbList>
          {THUMBS.map((thumb, i) => (
            <ThumbRow key={i}>
              <ThumbNum $active={i === 4}>{i + 1}</ThumbNum>
              <Thumb $active={i === 4}>
                <Svg width={122} height={69} viewBox="0 0 124 71">
                  {thumb}
                </Svg>
              </Thumb>
            </ThumbRow>
          ))}
        </ThumbList>
        <ScrollTrack>
          <ScrollButton>
            <Tri color="#808080" />
          </ScrollButton>
          <ScrollThumb $height={66} $top={1} />
          <Spacer />
          <ScrollButton>
            <Tri down color="#808080" />
          </ScrollButton>
        </ScrollTrack>
      </Sidebar>

      <Editor>
        <EditorCanvas>
          <Slide>
            <SlideHeader>
              <Svg width={58} height={55} viewBox="0 0 58 56" fill="none" strokeWidth="2">
                <path d="M15 1l15 15-15 15L1 16z" stroke="#f0a93a" />
                <path d="M41 7l15 15-15 15-15-15z" stroke="#2eab9d" />
                <path d="M22 27l15 15-15 14L7 42z" stroke="#2eab9d" />
              </Svg>
              <SlideTitle>运行时数据区结构图</SlideTitle>
              <Brand>
                <UBadge w={34} h={34} />
                <BrandText>尚硅谷</BrandText>
              </Brand>
            </SlideHeader>

            <Diagram>
              <Column $width={145}>
                <Heading $offset={0} />
                <AreaBox $bg="#ff7e6a" $size={21.5} $lead={27}>
                  Method
                  <br />
                  Area
                </AreaBox>
              </Column>
              <Column $width={145} $gap={15}>
                <Heading $offset={0} />
                <AreaBox $bg="#66b2ff" $color="#2d4a6c" $size={21.5} $lead={27}>
                  Heap
                  <br />
                  Area
                </AreaBox>
              </Column>
              <Column $width={402} $gap={23}>
                <Heading $offset={5} $nudge={12}>
                  Stack Area
                </Heading>
                <StackGrid>
                  {["Thread 1", "Thread 2", "Thread 1"].map((t, i) => (
                    <StackCell key={i} $wide>
                      {t}
                    </StackCell>
                  ))}
                  {Array.from({ length: 6 }).map((_, i) => (
                    <StackCell key={i} />
                  ))}
                  {Array.from({ length: 6 }).map((_, i) => (
                    <StackCell key={i} $size={17.4}>
                      Stack Frame
                    </StackCell>
                  ))}
                  {[0, 1, 2].map((i) => (
                    <FrameParts key={i}>
                      <StackCell>LVA</StackCell>
                      <StackCell>OS</StackCell>
                      <StackCell>FD</StackCell>
                    </FrameParts>
                  ))}
                </StackGrid>
                <RuntimeLabel $offset={8} $size={20.5}>
                  Runtime Data Areas
                </RuntimeLabel>
                <Highlight />
                <Pointer>
                  <Svg width={30} height={42} viewBox="0 0 30 42">
                    <path
                      d="M13 1l4 5h-3v7h7v-3l5 4-5 4v-3h-7v5h-4v-5H3v3l-4-4 4-4v3h7V6H7z"
                      fill="#111"
                      stroke="#fff"
                      strokeWidth=".8"
                    />
                    <path d="M11 15l1 19 5-5 5 11 4-2-5-10h7z" fill="#fff" stroke="#333" strokeWidth=".8" />
                  </Svg>
                </Pointer>
              </Column>
              <Column $width={152} $gap={18}>
                <Heading $offset={11} $nudge={3}>
                  PC Registers
                </Heading>
                <RegisterStack>
                  <RegisterCell>
                    PC Register for
                    <br />
                    Thread 1
                  </RegisterCell>
                  <RegisterCell>
                    PC Register for
                    <br />
                    Thread 2
                  </RegisterCell>
                  <RegisterCell>...</RegisterCell>
                  <RegisterCell>
                    PC Register for
                    <br />
                    Thread n
                  </RegisterCell>
                </RegisterStack>
              </Column>
              <Column $width={128} $gap={24}>
                <Heading $offset={0} />
                <AreaBox $bg="#e3d3fa" $size={19} $lead={23.5}>
                  Native
                  <br />
                  Method
                  <br />
                  Stack
                </AreaBox>
              </Column>
            </Diagram>

            <Watermark>让天下没有难学的技术</Watermark>
          </Slide>
        </EditorCanvas>
        <EditorScroll>
          <ScrollButton>
            <Tri color="#808080" />
          </ScrollButton>
          <ScrollThumb $height={21} $top={38} />
          <Spacer />
          <ScrollButton>
            <Tri down color="#808080" />
          </ScrollButton>
          <PageStep>
            <WinIcon w={12} h={14} stroke="#777" sw={1.2}>
              <path d="M1 6l5-5 5 5zM1 12l5-5 5 5z" fill="#777" />
            </WinIcon>
          </PageStep>
          <PageStep>
            <WinIcon w={12} h={14} stroke="#777" sw={1.2}>
              <path d="M1 2h10L6 7zM1 8h10l-5 5z" fill="#777" />
            </WinIcon>
          </PageStep>
        </EditorScroll>
      </Editor>
    </Main>

    <StatusBar>
      <SlideCount>幻灯片 第 5 张，共 78 张</SlideCount>
      <StatusSlot $width={20}>
        <WinIcon w={20} h={18} stroke="#777" sw={1.1}>
          <path d="M9 3C7 1 4 1 1 2v14c3-1 6-1 8 1 2-2 4-2 7-1V9M9 3v14M18 2l-6 7-1 3 3-1 6-7z" />
        </WinIcon>
      </StatusSlot>
      <Lang>中文(中国)</Lang>
      <NoteArc />

      <StatusRight>
        <StatusSlot $width={22}>
          <WinIcon w={16} h={16} stroke="#777" sw={1.2}>
            <path d="M1 8h14M1 11h14M4 14h8M5 4l3-3 3 3z" />
          </WinIcon>
        </StatusSlot>
        <StatusSlot $width={208}>
          <NotesCut>备</NotesCut>
        </StatusSlot>
        <StatusSlot $width={32}>
          <WinIcon w={10} h={18} stroke="#777" sw={1.2}>
            <rect x="1" y="1" width="7" height="6" />
            <rect x="1" y="11" width="7" height="6" />
          </WinIcon>
        </StatusSlot>
        <StatusSlot $width={46}>
          <WinIcon w={18} h={20} stroke="#777" sw={1.1}>
            <path d="M1 2l8 2 8-2v15l-8 2-8-2zM9 4v15M3 7l4 1M3 10l4 1M3 13l4 1M15 7l-4 1M15 10l-4 1M15 13l-4 1" />
          </WinIcon>
        </StatusSlot>
        <StatusSlot $width={54}>
          <WinIcon w={18} h={18} stroke="#777" sw={1.3}>
            <path d="M1 2h16M3 2v7h12V2M9 9v6M5 16h8" />
          </WinIcon>
        </StatusSlot>
        <StatusSlot $width={16}>
          <WinIcon w={8} h={4} stroke="#666" sw={2.4}>
            <path d="M0 2h8" />
          </WinIcon>
        </StatusSlot>
        <ZoomTrack>
          <ZoomKnob />
        </ZoomTrack>
        <StatusSlot $width={20}>
          <WinIcon w={11} h={11} stroke="#666" sw={2}>
            <path d="M0 5.500h11M5.500 0v11" />
          </WinIcon>
        </StatusSlot>
        <StatusSlot $width={58}>
          <StatusText $lift={2}>99%</StatusText>
        </StatusSlot>
        <StatusSlot $width={34}>
          <WinIcon w={18} h={18} stroke="#777" sw={1.1}>
            <rect x="1" y="1" width="16" height="16" />
            <path d="M9 3v3M9 12v3M3 9h3M12 9h3M3 3l3 3M15 3l-3 3M3 15l3-3M15 15l-3-3" />
          </WinIcon>
        </StatusSlot>
      </StatusRight>

      <ImeBar>
        <UBadge w={24} h={25} />
        <ImeText>英</ImeText>
        <StatusSlot $width={32}>
          <Svg width={16} height={18} viewBox="0 0 16 18">
            <path d="M9 0c4 3 5 8 3 12-2 4-7 6-12 4 5-1 8-3 9-7 1-3 1-6 0-9z" fill={BLUE} />
          </Svg>
        </StatusSlot>
        <StatusSlot $width={24}>
          <Svg width={14} height={16} viewBox="0 0 14 16">
            <circle cx="3" cy="3" r="2" fill={BLUE} />
            <circle cx="11" cy="10" r="1.8" fill={BLUE} />
            <path d="M11 10c1 2 0 4-2 5" stroke={BLUE} fill="none" strokeWidth="1.4" />
          </Svg>
        </StatusSlot>
        <StatusSlot $width={26}>
          <Svg width={22} height={18} viewBox="0 0 22 18">
            <rect x="0" y="0" width="22" height="18" rx="2" fill={BLUE} />
            <path d="M2 4h18M2 8h18M2 12h18" stroke="#f0f6fb" strokeWidth="2" strokeDasharray="2 1.6" />
          </Svg>
        </StatusSlot>
        <StatusSlot $width={26}>
          <Svg width={16} height={20} viewBox="0 0 16 20">
            <circle cx="8" cy="5" r="4.500" fill={BLUE} />
            <path d="M1 20c-2-7 3-9 7-9s9 2 7 9z" fill={BLUE} />
          </Svg>
        </StatusSlot>
        <StatusSlot $width={22}>
          <Svg width={18} height={20} viewBox="0 0 18 20">
            <path
              d="M17 5c0 4-3 6-6 5l-7 8c-1 2-3 1-3.500 0s-1-2 .5-3l7-7c-1-4 2-7 6-7l-3 3 1 3 3 1z"
              fill={BLUE}
            />
          </Svg>
        </StatusSlot>
      </ImeBar>
    </StatusBar>

    <Letterbox />
  </AppRoot>
);

export default App;
